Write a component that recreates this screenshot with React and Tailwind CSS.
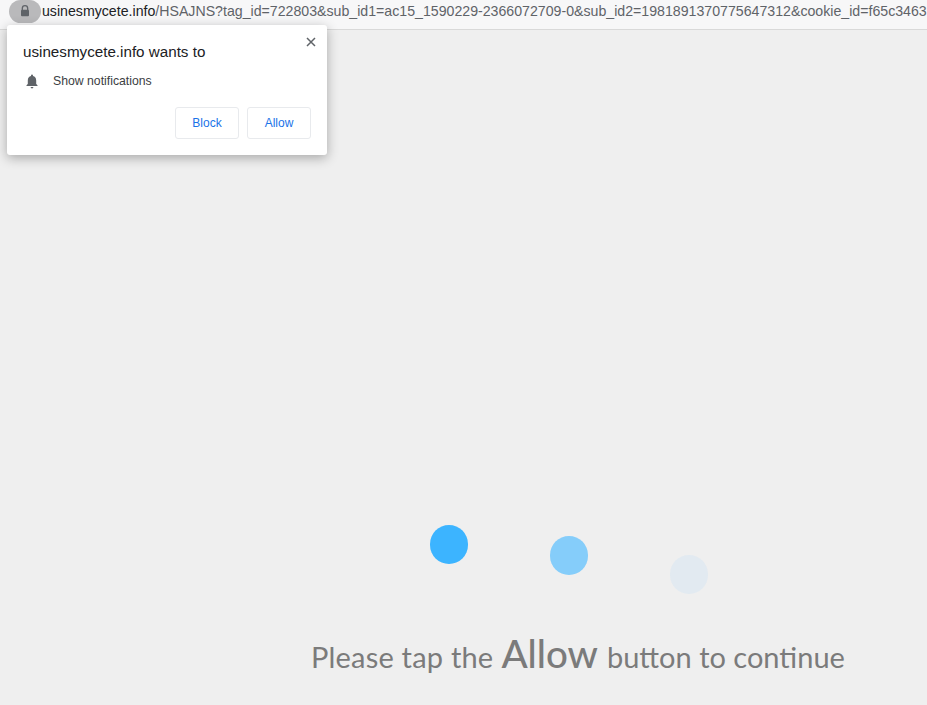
export default function App() {
  return (
    <div className="relative h-[705px] w-[927px] overflow-hidden bg-[#efefef] font-['Liberation_Sans',sans-serif]">
      <header className="flex h-[30px] items-start overflow-hidden border-b border-[#d9d9d9] bg-[#f7f7f8]">
        <div className="ml-[9px] flex h-[23px] w-[32px] shrink-0 items-center justify-center rounded-full bg-[#b9b9bb]">
          <svg width="10" height="12" viewBox="0 0 10 12" className="mb-[2px]">
            <path d="M2.3 5V3.4a2.7 2.7 0 0 1 5.4 0V5" fill="none" stroke="#5f6368" strokeWidth="1.3" />
            <rect x="1" y="4.8" width="8" height="6.4" rx="1" fill="#5f6368" />
          </svg>
        </div>
        <div className="whitespace-nowrap pl-px pt-[3px] text-[14.16px] leading-[16px] text-[#5f6368]">
          <span className="text-[#202124]">usinesmycete.info</span>/HSAJNS?tag_id=722803&amp;sub_id1=ac15_1590229-2366072709-0&amp;sub_id2=1981891370775647312&amp;cookie_id=f65c3463
        </div>
      </header>

      <div className="absolute left-[7px] top-[25px] h-[130px] w-[320px] rounded-[3px] bg-white shadow-[0_3px_12px_rgba(0,0,0,0.3)]">
        <svg width="10" height="10" viewBox="0 0 10 10" className="absolute right-[11px] top-[12px]">
          <path d="M1 1l8 8M9 1l-8 8" stroke="#5f6368" strokeWidth="1.5" />
        </svg>
        <div className="pl-4 pt-[18px] text-[15.2px] leading-[18px] text-[#202124]">usinesmycete.info wants to</div>
        <div className="mt-[12px] flex items-center pl-[18px] text-[12.25px] leading-[16px] text-[#3c4043]">
          <svg width="14" height="15" viewBox="0 0 14 15">
            <path d="M7 0.5a1 1 0 0 1 1 1v.6c2 .5 3.2 2.2 3.2 4.4v3.4l1.3 1.3v.7h-11v-.7l1.3-1.3V6.500c0-2.200 1.200-3.900 3.200-4.400v-.6a1 1 0 0 1 1-1z" fill="#5f6368" />
            <path d="M5.600 13h2.800a1.400 1.400 0 0 1-2.800 0z" fill="#5f6368" />
          </svg>
          <span className="ml-[14px]">Show notifications</span>
        </div>
        <div className="mt-[18px] flex justify-end gap-2 pr-4">
          <button className="h-8 w-16 rounded-[3px] border border-[#e8eaed] bg-white text-[12px] text-[#1a73e8]">Block</button>
          <button className="h-8 w-16 rounded-[3px] border border-[#e8eaed] bg-white text-[12px] text-[#1a73e8]">Allow</button>
        </div>
      </div>

      <main className="pl-[311px]">
        <div className="flex items-start gap-[82px] pl-[119px] pt-[495px]">
          <div className="h-[39px] w-[38px] rounded-full bg-[#3cb4ff] blur-[0.5px]" />
          <div className="mt-[11px] h-[39px] w-[38px] rounded-full bg-[#85cdfa] blur-[0.5px]" />
          <div className="mt-[30px] h-[39px] w-[38px] rounded-full bg-[#e2eaf1] blur-[0.5px]" />
        </div>
        <p className="mt-[35px] flex items-baseline whitespace-nowrap font-['Lato',sans-serif] text-[29px] leading-[48px] text-[#7b7b7b]">
          <span className="tracking-[0.2px]">Please tap the</span>
          <span className="ml-[8px] mr-[9px] text-[38.5px] font-medium">Allow</span>
          <span>button to continue</span>
        </p>
      </main>
    </div>
  );
}
